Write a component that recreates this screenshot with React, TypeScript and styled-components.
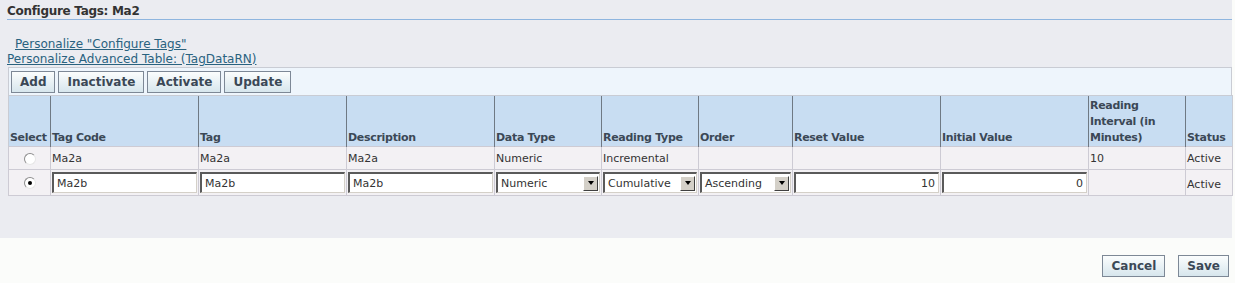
import React from 'react';
import styled, { createGlobalStyle } from 'styled-components';

const GlobalStyle = createGlobalStyle`
  body {
    margin: 0;
    background: #fbfcfa;
    font-family: Tahoma, "DejaVu Sans", sans-serif;
  }
`;

type Row = {
  code: string;
  tag: string;
  desc: string;
  dataType: string;
  readingType: string;
  order: string;
  reset: string;
  initial: string;
  interval: string;
  status: string;
};

const columns = [
  { label: 'Select', width: 42 },
  { label: 'Tag Code', width: 148 },
  { label: 'Tag', width: 148 },
  { label: 'Description', width: 148 },
  { label: 'Data Type', width: 107 },
  { label: 'Reading Type', width: 97 },
  { label: 'Order', width: 94 },
  { label: 'Reset Value', width: 148 },
  { label: 'Initial Value', width: 148 },
  { label: 'Reading Interval (in Minutes)', width: 97 },
  { label: 'Status', width: 47 },
];

const Page = styled.div`
  width: 1232px;
  height: 238px;
  background: #ebecf1;
  box-sizing: border-box;
  padding: 4px 0 0 7px;
`;

const Title = styled.h1`
  margin: 0;
  font-size: 12px;
  letter-spacing: -0.3px;
  font-weight: bold;
  color: #333333;
  line-height: 14px;
  padding-bottom: 1px;
  border-bottom: 1px solid #8eb5df;
`;

const Links = styled.div`
  display: flex;
  flex-direction: column;
  margin-top: 17px;
`;

const Link = styled.a<{ $indent?: number }>`
  font-size: 12px;
  line-height: 15px;
  color: #29627f;
  text-decoration: underline;
  margin-left: ${p => p.$indent || 0}px;
  width: fit-content;
  cursor: pointer;
`;

const Region = styled.div`
  margin-left: 1px;
  width: 1224px;
`;

const Toolbar = styled.div`
  display: flex;
  gap: 3px;
  height: 28px;
  box-sizing: border-box;
  padding: 3px 2px;
  background: #eef5fc;
  border: 1px solid #c9ccd4;
  border-bottom: none;
`;

const Button = styled.button`
  height: 22px;
  box-sizing: border-box;
  padding: 0 8px;
  font-family: Tahoma, "DejaVu Sans", sans-serif;
  font-size: 12px;
  font-weight: bold;
  color: #3b4856;
  background: linear-gradient(#fbfdfd, #d7e6ed);
  border: 1px solid #7d8896;
  border-radius: 0;
`;

const Table = styled.table`
  border-collapse: collapse;
  table-layout: fixed;
  width: 1224px;
  border: 1px solid #c9ccd4;
`;

const Th = styled.th`
  background: #c8ddf2;
  height: 50px;
  padding: 0 1px;
  vertical-align: bottom;
  text-align: left;
  font-size: 11px;
  letter-spacing: -0.3px;
  font-weight: bold;
  color: #3b4856;
  line-height: 16px;
  border-left: 1px solid #6f7984;
  border-top: 1px solid #c9ccd4;
  &:first-child {
    border-left: 1px solid #c9ccd4;
  }
`;

const Td = styled.td<{ $h: number; $center?: boolean; $low?: boolean }>`
  height: ${p => p.$h}px;
  padding: ${p => (p.$low ? '4px 1px 0' : '0 1px')};
  box-sizing: border-box;
  background: #f3f1f4;
  border: 1px solid #cdcbd4;
  font-size: 11px;
  color: #333333;
  text-align: ${p => (p.$center ? 'center' : 'left')};
  vertical-align: middle;
`;

const Radio = styled.span<{ $checked?: boolean }>`
  display: inline-block;
  width: 10px;
  height: 10px;
  border-radius: 50%;
  border: 1px solid #8d8d8d;
  border-right-color: #e6e6e6;
  border-bottom-color: #e6e6e6;
  background: #ffffff;
  position: relative;
  vertical-align: middle;
  &::after {
    content: '';
    display: ${p => (p.$checked ? 'block' : 'none')};
    position: absolute;
    left: 3px;
    top: 3px;
    width: 4px;
    height: 4px;
    border-radius: 50%;
    background: #000;
  }
`;

const TextInput = styled.input<{ $right?: boolean }>`
  display: block;
  width: 100%;
  height: 21px;
  box-sizing: border-box;
  font-family: Tahoma, "DejaVu Sans", sans-serif;
  font-size: 11px;
  color: #333333;
  padding: 0 3px;
  text-align: ${p => (p.$right ? 'right' : 'left')};
  background: #ffffff;
  border: 1px solid;
  border-color: #5a5a5a #d4d0c8 #d4d0c8 #5a5a5a;
  border-left-width: 2px;
  border-top-width: 2px;
  outline: none;
`;

const SelectBox = styled.div`
  display: flex;
  align-items: center;
  height: 21px;
  box-sizing: border-box;
  background: #ffffff;
  border: 1px solid;
  border-color: #5a5a5a #d4d0c8 #d4d0c8 #5a5a5a;
  border-left-width: 2px;
  border-top-width: 2px;
  font-size: 11px;
  color: #333333;
  padding-left: 3px;
`;

const SelectText = styled.span`
  flex: 1;
`;

const Arrow = styled.span`
  width: 15px;
  height: 15px;
  margin-right: 1px;
  box-sizing: border-box;
  background: #d4d0c8;
  border: 1px solid;
  border-color: #ffffff #404040 #404040 #ffffff;
  display: flex;
  align-items: center;
  justify-content: center;
  &::after {
    content: '';
    border-left: 3px solid transparent;
    border-right: 3px solid transparent;
    border-top: 4px solid #000;
  }
`;

const Footer = styled.div`
  display: flex;
  justify-content: flex-end;
  gap: 13px;
  width: 1232px;
  padding: 17px 3px 0 0;
  box-sizing: border-box;
`;

const Select = ({ value }: { value: string }) => (
  <SelectBox>
    <SelectText>{value}</SelectText>
    <Arrow />
  </SelectBox>
);

const readRow: Row = {
  code: 'Ma2a',
  tag: 'Ma2a',
  desc: 'Ma2a',
  dataType: 'Numeric',
  readingType: 'Incremental',
  order: '',
  reset: '',
  initial: '',
  interval: '10',
  status: 'Active',
};

const editRow: Row = {
  code: 'Ma2b',
  tag: 'Ma2b',
  desc: 'Ma2b',
  dataType: 'Numeric',
  readingType: 'Cumulative',
  order: 'Ascending',
  reset: '10',
  initial: '0',
  interval: '',
  status: 'Active',
};

const App = () => {
  return (
    <>
      <GlobalStyle />
      <Page>
        <Title>Configure Tags: Ma2</Title>
        <Links>
          <Link $indent={8}>Personalize "Configure Tags"</Link>
          <Link>Personalize Advanced Table: (TagDataRN)</Link>
        </Links>
        <Region>
          <Toolbar>
            <Button>Add</Button>
            <Button>Inactivate</Button>
            <Button>Activate</Button>
            <Button>Update</Button>
          </Toolbar>
          <Table>
            <colgroup>
              {columns.map(c => (
                <col key={c.label} style={{ width: c.width }} />
              ))}
            </colgroup>
            <thead>
              <tr>
                {columns.map(c => (
                  <Th key={c.label}>{c.label}</Th>
                ))}
              </tr>
            </thead>
            <tbody>
              <tr>
                <Td $h={23} $center><Radio /></Td>
                <Td $h={23}>{readRow.code}</Td>
                <Td $h={23}>{readRow.tag}</Td>
                <Td $h={23}>{readRow.desc}</Td>
                <Td $h={23}>{readRow.dataType}</Td>
                <Td $h={23}>{readRow.readingType}</Td>
                <Td $h={23}>{readRow.order}</Td>
                <Td $h={23}>{readRow.reset}</Td>
                <Td $h={23}>{readRow.initial}</Td>
                <Td $h={23}>{readRow.interval}</Td>
                <Td $h={23}>{readRow.status}</Td>
              </tr>
              <tr>
                <Td $h={26} $center><Radio $checked /></Td>
                <Td $h={26}><TextInput defaultValue={editRow.code} /></Td>
                <Td $h={26}><TextInput defaultValue={editRow.tag} /></Td>
                <Td $h={26}><TextInput defaultValue={editRow.desc} /></Td>
                <Td $h={26}><Select value={editRow.dataType} /></Td>
                <Td $h={26}><Select value={editRow.readingType} /></Td>
                <Td $h={26}><Select value={editRow.order} /></Td>
                <Td $h={26}><TextInput $right defaultValue={editRow.reset} /></Td>
                <Td $h={26}><TextInput $right defaultValue={editRow.initial} /></Td>
                <Td $h={26} $low>{editRow.interval}</Td>
                <Td $h={26} $low>{editRow.status}</Td>
              </tr>
            </tbody>
          </Table>
        </Region>
      </Page>
      <Footer>
        <Button>Cancel</Button>
        <Button>Save</Button>
      </Footer>
    </>
  );
};

export default App;
